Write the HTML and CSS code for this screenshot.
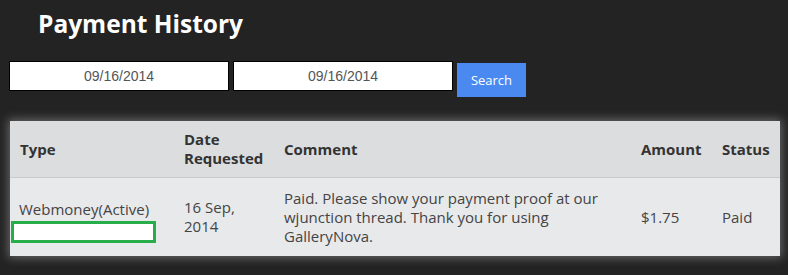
FILE: index.html
```html
<!DOCTYPE html>
<html>
<head>
<meta charset="utf-8">
<link rel="stylesheet" href="styles.css">
</head>
<body>
<div class="page">
  <h1 class="title">Payment History</h1>
  <form class="filters">
    <input class="date" type="text" value="09/16/2014">
    <input class="date" type="text" value="09/16/2014">
    <button class="search" type="button">Search</button>
  </form>
  <div class="panel">
    <table class="history">
      <colgroup>
        <col class="c-type"><col class="c-date"><col class="c-comment"><col class="c-amount"><col class="c-status">
      </colgroup>
      <thead>
        <tr>
          <th>Type</th>
          <th>Date<br>Requested</th>
          <th>Comment</th>
          <th>Amount</th>
          <th>Status</th>
        </tr>
      </thead>
      <tbody>
        <tr>
          <td>Webmoney(Active)<div class="account"></div></td>
          <td>16 Sep,<br>2014</td>
          <td>Paid. Please show your payment proof at our wjunction thread. Thank you for using GalleryNova.</td>
          <td>$1.75</td>
          <td>Paid</td>
        </tr>
      </tbody>
    </table>
  </div>
</div>
</body>
</html>
```
FILE: styles.css
```css
html, body {
  margin: 0;
  padding: 0;
  background: #232323;
}
.page {
  width: 788px;
  height: 275px;
  font-family: "Open Sans", sans-serif;
}
.title {
  margin: 0;
  padding: 6px 0 0 38px;
  font-size: 24.5px;
  line-height: 36px;
  font-weight: 700;
  color: #ffffff;
}
.filters {
  display: flex;
  align-items: flex-start;
  gap: 4px;
  margin: 19px 0 0 9px;
}
.date {
  box-sizing: border-box;
  width: 220px;
  height: 30px;
  margin: 0;
  padding: 0;
  border: 1px solid #000;
  background: #fff;
  font-family: "Liberation Sans", Arial, sans-serif;
  font-size: 14px;
  color: #555;
  text-align: center;
  outline: none;
}
.search {
  box-sizing: border-box;
  width: 69px;
  height: 34px;
  margin-top: 2px;
  padding: 0;
  border: none;
  background: #4a8af0;
  color: #fff;
  font-family: "Open Sans", sans-serif;
  font-size: 13px;
}
.panel {
  margin: 24px 8px 0 10px;
  box-shadow: 0 0 9px 2px rgba(255, 255, 255, 0.3);
}
.history {
  width: 770px;
  border-collapse: collapse;
  table-layout: fixed;
  font-size: 15px;
  color: #3a3a3a;
}
.c-type { width: 164px; }
.c-date { width: 100px; }
.c-comment { width: 357px; }
.c-amount { width: 81px; }
.c-status { width: 68px; }
.history th {
  background: #dcdddf;
  height: 56px;
  padding: 0 10px;
  text-align: left;
  font-weight: 700;
  line-height: 19px;
  color: #333;
  border-bottom: 1px solid #c9cacc;
}
.history td {
  background: #e8e9eb;
  height: 78px;
  padding: 0 10px;
  line-height: 19px;
  color: #444;
  vertical-align: middle;
}
.history td:first-child {
  padding-left: 9px;
}
.account {
  box-sizing: border-box;
  width: 145px;
  height: 22px;
  margin: 2px 0 -8px -8px;
  border: 3px solid #27ad4a;
  background: #fff;
}
```
